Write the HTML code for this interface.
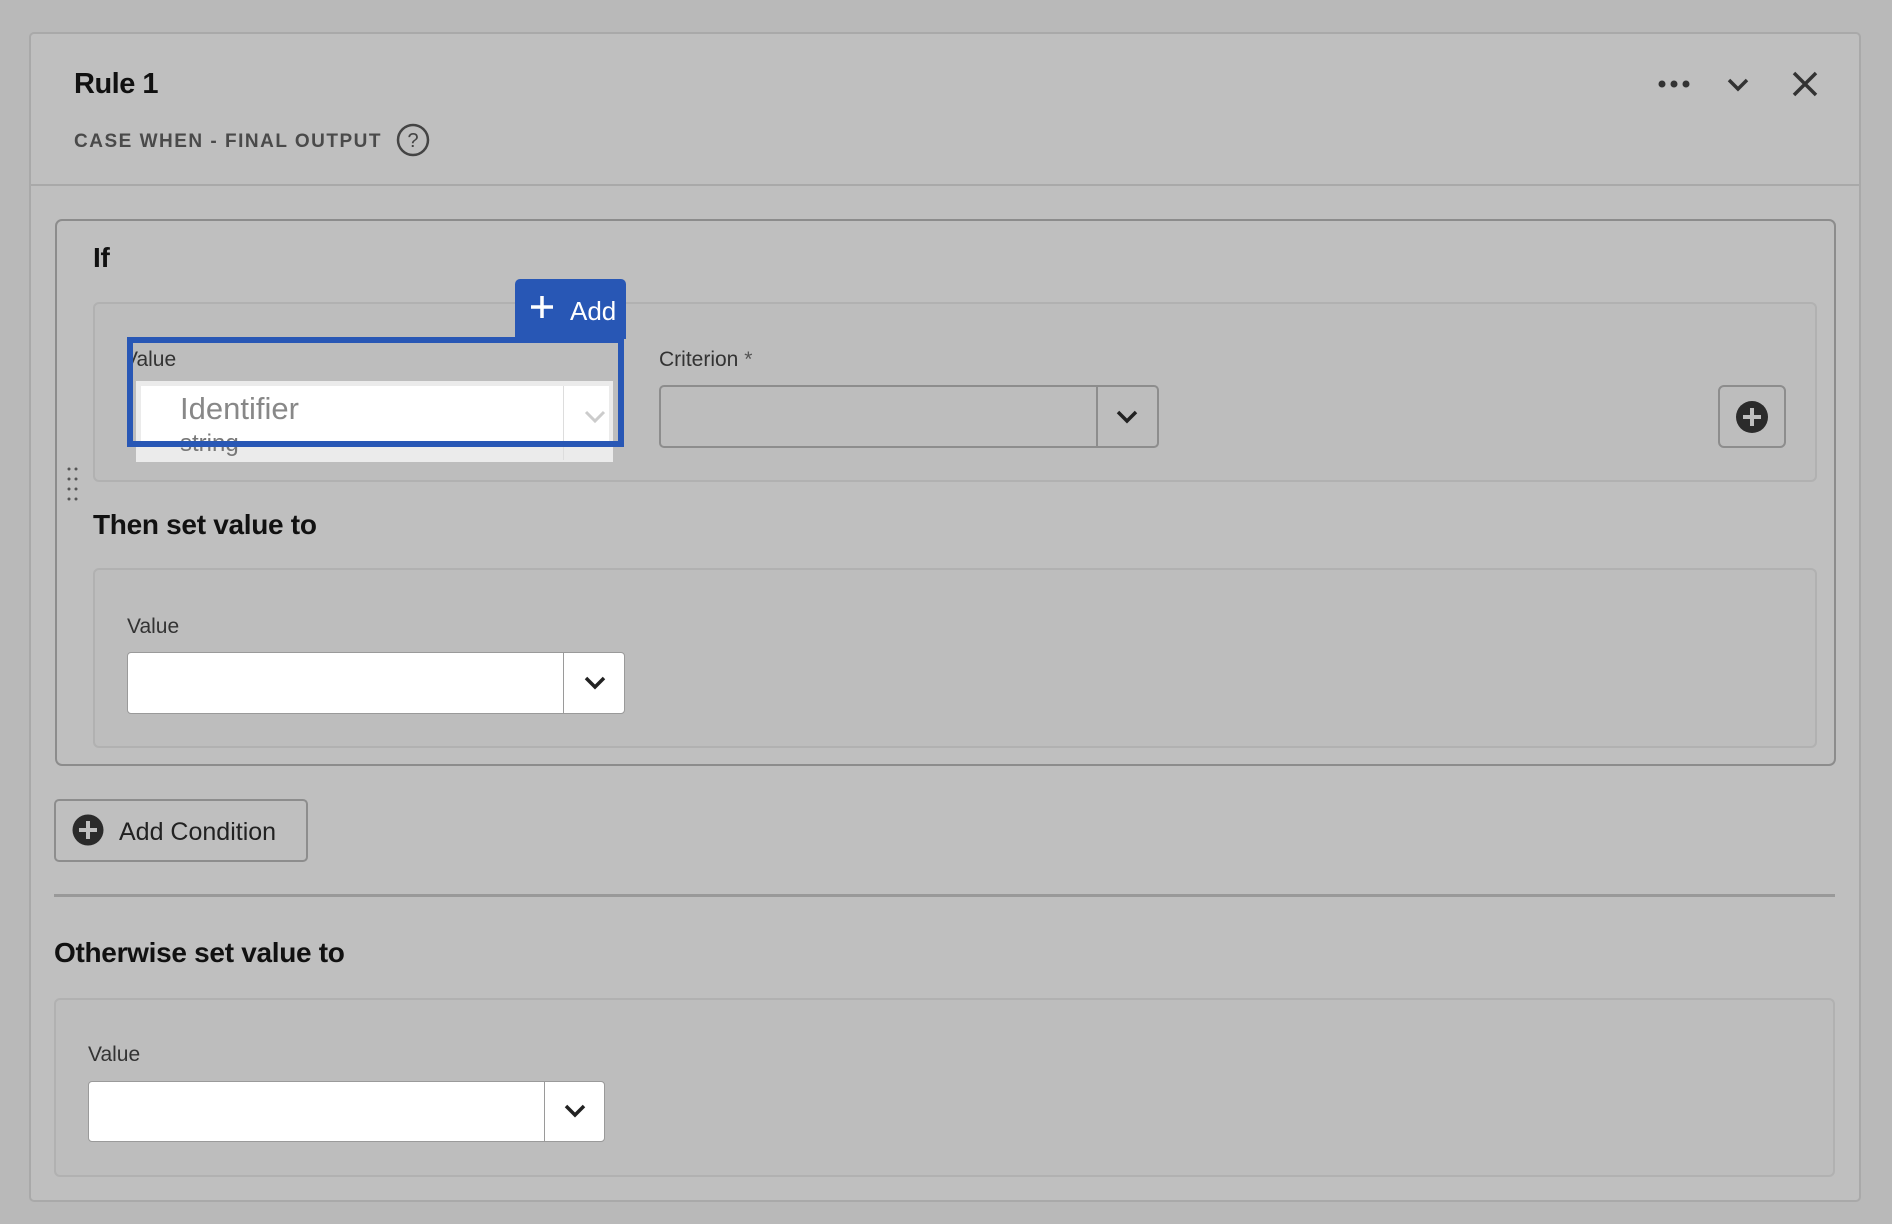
<!DOCTYPE html>
<html><head><meta charset="utf-8"><style>
*{box-sizing:border-box;margin:0;padding:0}
body{width:1892px;height:1224px;background:#b9b9b9;font-family:"Liberation Sans",sans-serif;position:relative;overflow:hidden;color:#111}
.a{position:absolute}
.panel{left:29px;top:32px;width:1832px;height:1170px;background:#bfbfbf;border:2px solid #a9a9a9;border-radius:5px}
.box{border:2px solid #8c8c8c;border-radius:7px}
.inner{border:2px solid #b1b1b1;border-radius:6px;background:#bdbdbd}
.lbl{font-size:21px;color:#333}
.h{font-size:28px;font-weight:bold;color:#111;letter-spacing:-0.3px}
.field{background:#fff;border:1px solid #9a9a9a;border-radius:4px}
.div{position:absolute;top:0;bottom:0;width:1px;background:#9a9a9a}
</style></head><body>
<div class="a panel"></div>
<div class="a" style="left:31px;top:184px;width:1828px;height:2px;background:#a9a9a9"></div>
<div class="a" style="left:74px;top:68px;font-size:29px;font-weight:bold;letter-spacing:-0.5px">Rule 1</div>
<div class="a" style="left:74px;top:131px;font-size:19px;font-weight:bold;color:#4a4a4a;letter-spacing:1.5px">CASE WHEN - FINAL OUTPUT</div>
<svg class="a" style="left:396px;top:123px" width="34" height="34" viewBox="0 0 34 34"><circle cx="17" cy="17" r="15" fill="none" stroke="#444" stroke-width="2.5"/><text x="17" y="24" text-anchor="middle" font-size="20" font-family="Liberation Sans" fill="#444">?</text></svg>
<svg class="a" style="left:1656px;top:74px" width="40" height="20"><circle cx="6" cy="10" r="3.5" fill="#333"/><circle cx="18" cy="10" r="3.5" fill="#333"/><circle cx="30" cy="10" r="3.5" fill="#333"/></svg>
<svg class="a" style="left:1726px;top:74px" width="24" height="20"><path d="M3 6l9 9 9-9" fill="none" stroke="#333" stroke-width="3.5"/></svg>
<svg class="a" style="left:1792px;top:71px" width="26" height="26"><path d="M2 2l22 22M24 2L2 24" stroke="#333" stroke-width="3.5"/></svg>

<div class="a box" style="left:55px;top:219px;width:1781px;height:547px"></div>
<div class="a h" style="left:93px;top:242px">If</div>
<div class="a inner" style="left:93px;top:302px;width:1724px;height:180px"></div>
<div class="a" style="left:515px;top:279px;width:111px;height:60px;background:#2857b5;border-radius:5px 5px 0 0"></div>
<svg class="a" style="left:530px;top:295px" width="24" height="24"><path d="M12 1v22M1 12h22" stroke="#fff" stroke-width="3.5"/></svg>
<div class="a" style="left:570px;top:296px;font-size:26px;color:#fff">Add</div>
<div class="a lbl" style="left:127px;top:348px;overflow:hidden;width:60px"><span style="margin-left:-3px">Value</span></div>
<div class="a" style="left:136px;top:381px;width:477px;height:81px;background:#ebebeb"></div>
<div class="a" style="left:141px;top:386px;width:468px;height:60px;background:#fff"></div>
<div class="a" style="left:563px;top:386px;width:1px;height:74px;background:#ddd"></div>
<svg class="a" style="left:584px;top:410px" width="22" height="14"><path d="M2 2l9 9 9-9" fill="none" stroke="#ccc" stroke-width="3"/></svg>
<div class="a" style="left:180px;top:391px;font-size:31px;color:#888">Identifier</div>
<div class="a" style="left:180px;top:430px;font-size:24px;color:#777">string</div>
<div class="a" style="left:127px;top:337px;width:497px;height:110px;border:6px solid #2857b5"></div>

<div class="a lbl" style="left:659px;top:348px">Criterion <span style="color:#555">*</span></div>
<div class="a" style="left:659px;top:385px;width:500px;height:63px;border:2px solid #8d8d8d;border-radius:5px"><div class="div" style="left:435px;width:2px;background:#8d8d8d"></div></div>
<svg class="a" style="left:1116px;top:410px" width="22" height="14"><path d="M2 2l9 9 9-9" fill="none" stroke="#222" stroke-width="3.5"/></svg>
<div class="a" style="left:1718px;top:385px;width:68px;height:63px;border:2px solid #8d8d8d;border-radius:6px"></div>
<svg class="a" style="left:1735px;top:400px" width="34" height="34"><circle cx="17" cy="17" r="16" fill="#2b2b2b"/><path d="M17 8v18M8 17h18" stroke="#bfbfbf" stroke-width="4"/></svg>
<svg class="a" style="left:67px;top:466px" width="12" height="38"><g fill="#555"><circle cx="2" cy="3" r="1.5"/><circle cx="9" cy="3" r="1.5"/><circle cx="2" cy="13" r="1.5"/><circle cx="9" cy="13" r="1.5"/><circle cx="2" cy="23" r="1.5"/><circle cx="9" cy="23" r="1.5"/><circle cx="2" cy="33" r="1.5"/><circle cx="9" cy="33" r="1.5"/></g></svg>

<div class="a h" style="left:93px;top:509px">Then set value to</div>
<div class="a inner" style="left:93px;top:568px;width:1724px;height:180px"></div>
<div class="a lbl" style="left:127px;top:615px">Value</div>
<div class="a field" style="left:127px;top:652px;width:498px;height:62px"><div class="div" style="left:435px"></div></div>
<svg class="a" style="left:584px;top:676px" width="22" height="14"><path d="M2 2l9 9 9-9" fill="none" stroke="#222" stroke-width="3.5"/></svg>

<div class="a" style="left:54px;top:799px;width:254px;height:63px;border:2px solid #8d8d8d;border-radius:5px"></div>
<svg class="a" style="left:72px;top:814px" width="32" height="32"><circle cx="16" cy="16" r="15.5" fill="#2b2b2b"/><path d="M16 7v18M7 16h18" stroke="#bfbfbf" stroke-width="4"/></svg>
<div class="a" style="left:119px;top:818px;font-size:25px;color:#222">Add Condition</div>

<div class="a" style="left:54px;top:894px;width:1781px;height:3px;background:#999"></div>
<div class="a h" style="left:54px;top:937px">Otherwise set value to</div>
<div class="a inner" style="left:54px;top:998px;width:1781px;height:179px"></div>
<div class="a lbl" style="left:88px;top:1043px">Value</div>
<div class="a field" style="left:88px;top:1081px;width:517px;height:61px"><div class="div" style="left:455px"></div></div>
<svg class="a" style="left:564px;top:1104px" width="22" height="14"><path d="M2 2l9 9 9-9" fill="none" stroke="#222" stroke-width="3.5"/></svg>
</body></html>
